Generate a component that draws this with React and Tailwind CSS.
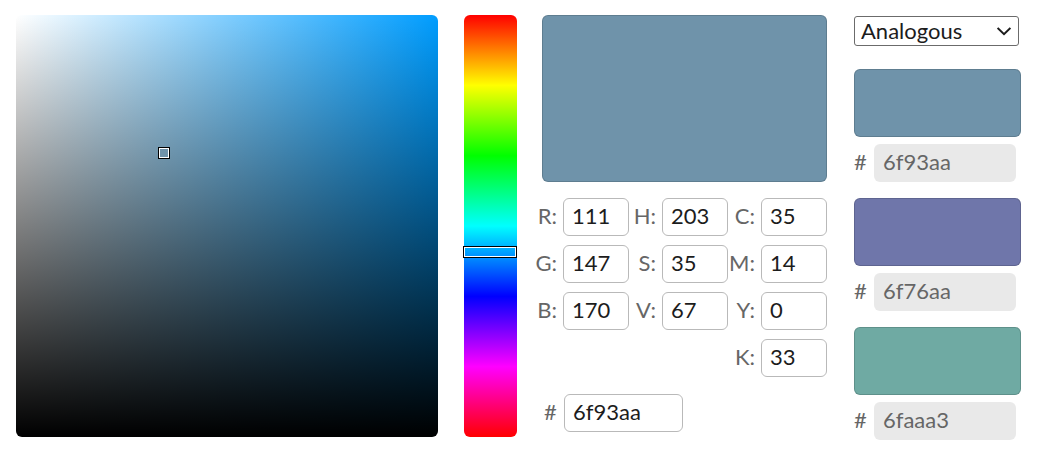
import React from "react";

const channels = [
  ["R", 111], ["H", 203], ["C", 35],
  ["G", 147], ["S", 35], ["M", 14],
  ["B", 170], ["V", 67], ["Y", 0],
  ["K", 33],
];

const harmonies = [
  { hex: "6f93aa", fill: "bg-[#6f93aa]" },
  { hex: "6f76aa", fill: "bg-[#6f76aa]" },
  { hex: "6faaa3", fill: "bg-[#6faaa3]" },
];

const field =
  "block h-[38px] w-full rounded-[6px] border border-[#b9b9b9] bg-white pl-2 pb-[3px] text-[22px] leading-[28px] text-[#1c1c1c] outline-none focus:border-[#4a90c2]";

function SaturationField() {
  return (
    <div className="relative aspect-square min-w-0 flex-1 rounded-[6px] bg-[linear-gradient(to_top,#000,transparent),linear-gradient(to_right,#fff,#009dff)]">
      <button
        type="button"
        aria-label="Saturation and brightness"
        className="absolute left-[35%] top-[32.7%] block size-3 -translate-x-1/2 -translate-y-1/2 border border-black bg-[#6f93aa] ring-1 ring-inset ring-white"
      />
    </div>
  );
}

function HueBar() {
  return (
    <div className="relative ml-[26px] w-[53px] shrink-0 rounded-[6px] bg-[linear-gradient(to_bottom,#f00,#ff0,#0f0,#0ff,#00f,#f0f,#f00)]">
      <div className="absolute -left-px right-0 top-[56.2%] h-3 -translate-y-1/2 border border-black ring-1 ring-inset ring-white" />
      <input
        type="range"
        aria-label="Hue"
        min="0"
        max="360"
        defaultValue="203"
        className="absolute inset-0 h-full w-full opacity-0 [writing-mode:vertical-lr]"
      />
    </div>
  );
}

function Values() {
  return (
    <section className="ml-[18px] w-[292px] shrink-0">
      <div className="ml-[7px] h-[167px] rounded-[6px] border border-black/15 bg-[#6f93aa]" />
      <div className="mt-4 grid grid-cols-[28px_66px_33px_66px_33px_66px] items-center gap-y-[9px]">
        {channels.map(([name, value]) => (
          <React.Fragment key={name}>
            <label
              htmlFor={"channel-" + name}
              className={
                name === "K"
                  ? "col-start-5 justify-self-end whitespace-nowrap pb-[2px] pr-[6px]"
                  : "justify-self-end whitespace-nowrap pb-[2px] pr-[6px]"
              }
            >
              {name}:
            </label>
            <input id={"channel-" + name} className={field} defaultValue={value} />
          </React.Fragment>
        ))}
      </div>
      <div className="mt-[17px] flex items-center pl-[9px]">
        <label htmlFor="hex" className="w-5 shrink-0 pb-[2px]">#</label>
        <div className="w-[119px]">
          <input id="hex" className={field} defaultValue="6f93aa" />
        </div>
      </div>
    </section>
  );
}

function Harmonies() {
  return (
    <section className="ml-[27px] w-[167px] shrink-0 pt-px">
      <div className="relative mr-[2px]">
        <select
          aria-label="Color harmony"
          defaultValue="Analogous"
          className="block h-[30px] w-full appearance-none rounded-[3px] border border-[#6b6b6b] bg-white pl-[6px] text-[22px] leading-[28px] text-[#1c1c1c]"
        >
          <option>Analogous</option>
          <option>Complementary</option>
          <option>Triadic</option>
        </select>
        <svg
          viewBox="0 0 14 9"
          className="pointer-events-none absolute right-2 top-[11px] h-[9px] w-[14px]"
          fill="none"
          stroke="#1c1c1c"
          strokeWidth="2"
        >
          <path d="M0.6 1 L7 7.2 L13.4 1" />
        </svg>
      </div>
      <div className="mt-[23px] flex flex-col gap-4">
        {harmonies.map(({ hex, fill }) => (
          <div key={hex}>
            <div className={"h-[68px] rounded-[6px] border border-black/15 " + fill} />
            <div className="mt-[7px] flex items-center">
              <label htmlFor={"harmony-" + hex} className="w-5 shrink-0 pb-[2px]">#</label>
              <input
                id={"harmony-" + hex}
                disabled
                defaultValue={hex}
                className="mr-[5px] h-[38px] min-w-0 flex-1 rounded-[6px] bg-[#e9e9e9] pb-[3px] pl-[9px] text-[22px] leading-[28px] text-[#666]"
              />
            </div>
          </div>
        ))}
      </div>
    </section>
  );
}

export default function App() {
  return (
    <main className="flex min-w-[800px] items-stretch bg-white pb-[15px] pl-4 pr-[18px] pt-[15px] font-['Lato','Open_Sans',sans-serif] text-[22px] leading-[28px] text-[#666]">
      <div className="flex min-w-0 flex-1 self-start">
        <SaturationField />
        <HueBar />
      </div>
      <Values />
      <Harmonies />
    </main>
  );
}
